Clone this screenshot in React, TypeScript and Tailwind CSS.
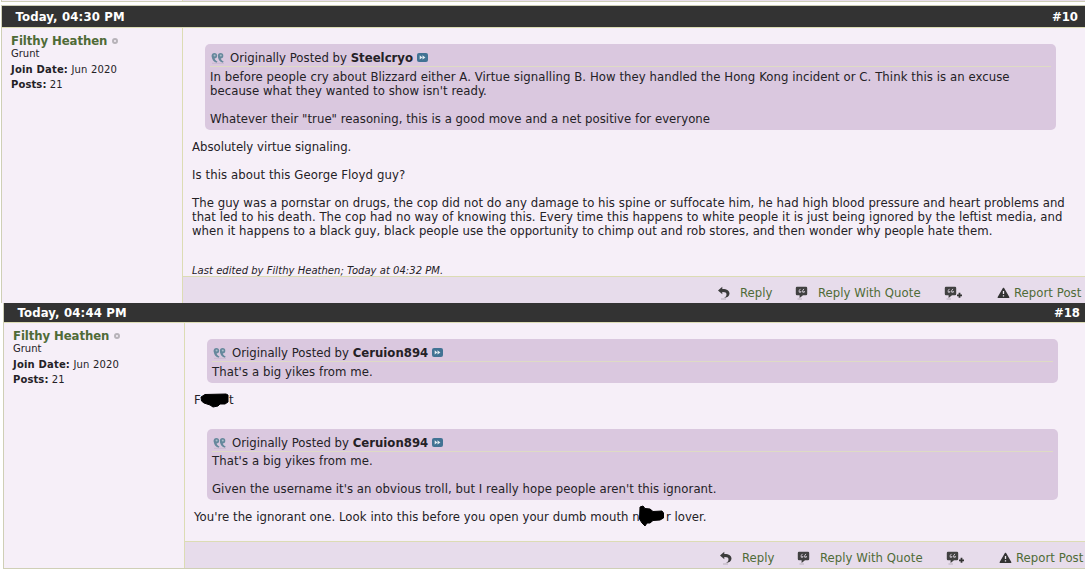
import type { ReactNode } from "react";

const condensed = "font-['DejaVu_Sans_Condensed','DejaVu_Sans',sans-serif]";

function QuoteIcon() {
  return (
    <svg width="14" height="12" viewBox="0 0 14 12" className="shrink-0">
      <g fill="#66889c">
        <circle cx="3.4" cy="3.8" r="2.7" />
        <path d="M0.7 3.6C0.6 7.4 2.4 9.8 5.6 10.8L6.5 9.4C4.4 8.6 3.4 7.6 3.6 5.6Z" />
        <circle cx="9.6" cy="3.8" r="2.7" />
        <path d="M6.9 3.6C6.8 7.4 8.6 9.8 11.8 10.8L12.7 9.4C10.6 8.6 9.6 7.6 9.8 5.6Z" />
      </g>
      <circle cx="3.6" cy="3.6" r="1" fill="#a9bcc9" />
      <circle cx="9.8" cy="3.6" r="1" fill="#a9bcc9" />
      <path d="M1 11.3H13" stroke="#c3b5cb" strokeWidth="0.8" />
    </svg>
  );
}

function ViewPostIcon() {
  return (
    <svg width="11" height="9" viewBox="0 0 11 9" className="ml-1 shrink-0">
      <rect width="11" height="9" rx="2" fill="#417394" />
      <path d="M2.7 2.2L5.4 4.4L2.7 6.6ZM5.5 2.2L8.4 4.4L5.5 6.6Z" fill="#e4edf2" />
    </svg>
  );
}

function ReplyIcon() {
  return (
    <svg width="14" height="14" viewBox="0 0 14 14" className="-ml-px mr-px shrink-0">
      <path d="M1 4.4L5.3 0.8V2.9C10 2.8 12.5 4.8 12.5 7.6C12.5 10.2 10.2 11.8 6.5 12.3C8.8 11 9.5 9.9 9.5 8.4C9.5 6.8 8.2 6 5.3 6.1V8.2Z" fill="#3c3c3c" />
      <path d="M4 13H9" stroke="#b8afbb" />
    </svg>
  );
}

function BubbleIcon({ plus = false }: { plus?: boolean }) {
  return (
    <svg width="20" height="14" viewBox="0 0 20 14" className="shrink-0">
      <path d="M2 0.8H11Q12.2 0.8 12.2 2V8Q12.2 9.2 11 9.2H8L4.6 12V9.2H2Q0.8 9.2 0.8 8V2Q0.8 0.8 2 0.8Z" fill="#414141" />
      <path d="M5.4 2.9L4.2 4.6V6.2H5.8V5M8.9 2.9L7.7 4.6V6.2H9.3V5" stroke="#e0d8e3" strokeWidth="0.9" fill="none" />
      <path d="M2.5 13H7" stroke="#b8afbb" />
      {plus && <path d="M15.5 6.8V11.8M13 9.3H18" stroke="#333" strokeWidth="1.8" />}
    </svg>
  );
}

function ReportIcon() {
  return (
    <svg width="13" height="12" viewBox="0 0 13 12" className="shrink-0">
      <path d="M6.5 1.4L11.7 10.4H1.3Z" fill="#333" stroke="#333" strokeWidth="1.4" strokeLinejoin="round" />
      <path d="M6.5 4V7M6.5 8.2V9.5" stroke="#eee8f0" strokeWidth="1.3" />
    </svg>
  );
}

function Quote({ author, bodyClass = "pt-[3px]", children }: { author: string; bodyClass?: string; children: ReactNode }) {
  return (
    <div className="ml-[22px] w-[851px] shrink-0 rounded-[5px] bg-[#dac8df] px-[5px] pb-1">
      <div className="flex h-[23px] items-center border-b border-[#dedbc4] pt-[5px] pl-px">
        <QuoteIcon />
        <span className="ml-[5px] tracking-[0.01px]">
          Originally Posted by <b>{author}</b>
        </span>
        <ViewPostIcon />
      </div>
      <div className={bodyClass}>{children}</div>
    </div>
  );
}

function Line({ className = "", children }: { className?: string; children?: ReactNode }) {
  return <p className={`h-3.5 ${className}`}>{children}</p>;
}

function UserInfo() {
  return (
    <div className="w-[181px] shrink-0 border-r border-[#dcdcb4] pt-[5px] pl-[9px] font-['DejaVu_Sans',sans-serif] text-[10px]">
      <div className={`flex h-[15px] items-center text-[13px] font-bold tracking-[-0.08px] text-[#4f6b37] ${condensed}`}>
        Filthy Heathen
        <span className="ml-[5px] size-[6px] rounded-full border-2 border-[#b7b3b9]" />
      </div>
      <p className="h-3.5 leading-[12px]">Grunt</p>
      <p className="h-[15px] pt-px leading-[14px] tracking-[0.18px]">
        <b>Join Date:</b>&nbsp;Jun 2020
      </p>
      <p className="h-[15px] pt-px leading-[14px] tracking-[0.1px]">
        <b>Posts:</b>&nbsp;21
      </p>
    </div>
  );
}

function PostHeader({ time, num, className }: { time: string; num: string; className: string }) {
  return (
    <div className={`flex shrink-0 items-center justify-between border-b border-[#dcdcb4] bg-[#333] pl-[13.5px] text-[13px] font-bold text-white ${className}`}>
      <span className="tracking-[0.17px]">{time}</span>
      <span>{num}</span>
    </div>
  );
}

function PostFooter() {
  return (
    <div className="flex h-[27px] shrink-0 items-center border-t border-[#dcdcb4] bg-[#e7dceb] pt-[5px] pl-[535px] text-[13px] tracking-[0.05px] text-[#4f6b37]">
      <ReplyIcon />
      <span className="ml-2 w-[55px]">Reply</span>
      <BubbleIcon />
      <span className="ml-[3px] w-[126px]">Reply With Quote</span>
      <BubbleIcon plus />
      <span className="ml-[33px] flex items-center gap-1">
        <ReportIcon />
        Report Post
      </span>
    </div>
  );
}

function Redaction({ d, className }: { d: string; className: string }) {
  return (
    <svg viewBox="0 0 30 22" className={`absolute h-[22px] w-[30px] ${className}`}>
      <path d={d} fill="#000" stroke="#000" strokeLinejoin="round" />
    </svg>
  );
}

export default function App() {
  return (
    <div className={`h-[578px] w-[1085px] overflow-hidden bg-white text-[13px] leading-[14px] whitespace-nowrap text-[#242126] ${condensed}`}>
      {/* tail of the previous post */}
      <div className="ml-px flex h-0.5 border-b border-l border-[#cfcfb6] bg-[#f6eff8]">
        <div className="w-[181px] border-r border-[#dcdcb4]" />
        <div className="flex-1 bg-[#e7dceb]" />
      </div>

      <div className="mt-[3px] ml-px flex h-[298px] flex-col border-t border-l border-[#cfcfb6] bg-[#f6eff8]">
        <PostHeader time="Today, 04:30 PM" num="#10" className="h-[22px] pr-[7px]" />
        <div className="flex min-h-0 flex-1">
          <UserInfo />
          <div className="flex min-w-0 flex-1 flex-col">
            <div className="flex-1 pt-4">
              <Quote author="Steelcryo">
                <Line className="tracking-[0.067px]">In before people cry about Blizzard either A. Virtue signalling B. How they handled the Hong Kong incident or C. Think this is an excuse</Line>
                <Line className="tracking-[0.045px]">because what they wanted to show isn't ready.</Line>
                <Line />
                <Line className="tracking-[0.036px]">Whatever their "true" reasoning, this is a good move and a net positive for everyone</Line>
              </Quote>
              <div className="pt-2.5 pl-[9px]">
                <Line>Absolutely virtue signaling.</Line>
                <Line />
                <Line className="tracking-[0.08px]">Is this about this George Floyd guy?</Line>
                <Line />
                <Line className="tracking-[0.048px]">The guy was a pornstar on drugs, the cop did not do any damage to his spine or suffocate him, he had high blood pressure and heart problems and</Line>
                <Line className="tracking-[0.054px]">that led to his death. The cop had no way of knowing this. Every time this happens to white people it is just being ignored by the leftist media, and</Line>
                <Line className="tracking-[0.03px]">when it happens to a black guy, black people use the opportunity to chimp out and rob stores, and then wonder why people hate them.</Line>
                <p className="pt-[27px] font-['DejaVu_Sans',sans-serif] text-[10px] leading-[11px] tracking-[0.03px] italic">
                  Last edited by Filthy Heathen; Today at 04:32 PM.
                </p>
              </div>
            </div>
            <PostFooter />
          </div>
        </div>
      </div>

      <div className="ml-[3px] flex h-[266px] flex-col border-b border-l border-[#cfcfb6] bg-[#f6eff8]">
        <PostHeader time="Today, 04:44 PM" num="#18" className="h-5 pr-[5px]" />
        <div className="flex min-h-0 flex-1">
          <UserInfo />
          <div className="flex min-w-0 flex-1 flex-col">
            <div className="flex-1 pt-4">
              <Quote author="Ceruion894">
                <Line className="tracking-[0.08px]">That's a big yikes from me.</Line>
              </Quote>
              <div className="relative flex pt-2.5 pb-[22px] pl-[9px]">
                <span className="w-[35px]">F</span>
                <span>t</span>
                <Redaction
                  className="top-[8px] left-[15px]"
                  d="M1 6L5 3.5L26 3L28 4V11L25 13L20 13L18 15L13 16L10 14L4 12L1.5 10Z"
                />
              </div>
              <Quote author="Ceruion894" bodyClass="pt-0.5">
                <Line className="tracking-[0.08px]">That's a big yikes from me.</Line>
                <Line />
                <Line className="tracking-[0.057px]">Given the username it's an obvious troll, but I really hope people aren't this ignorant.</Line>
              </Quote>
              <div className="relative flex pt-2.5 pl-[9px]">
                <span className="w-[472px] tracking-[0.055px]">You're the ignorant one. Look into this before you open your dumb mouth n</span>
                <span>r lover.</span>
                <Redaction
                  className="top-[5px] left-[453px]"
                  d="M2 2L5 1L7 3.5L12 4L15 6.5L24 6L25.5 8V13L22 15L15 15.5L12 18L9 18L7 21L4 18L1.5 14Z"
                />
              </div>
            </div>
            <PostFooter />
          </div>
        </div>
      </div>
    </div>
  );
}
